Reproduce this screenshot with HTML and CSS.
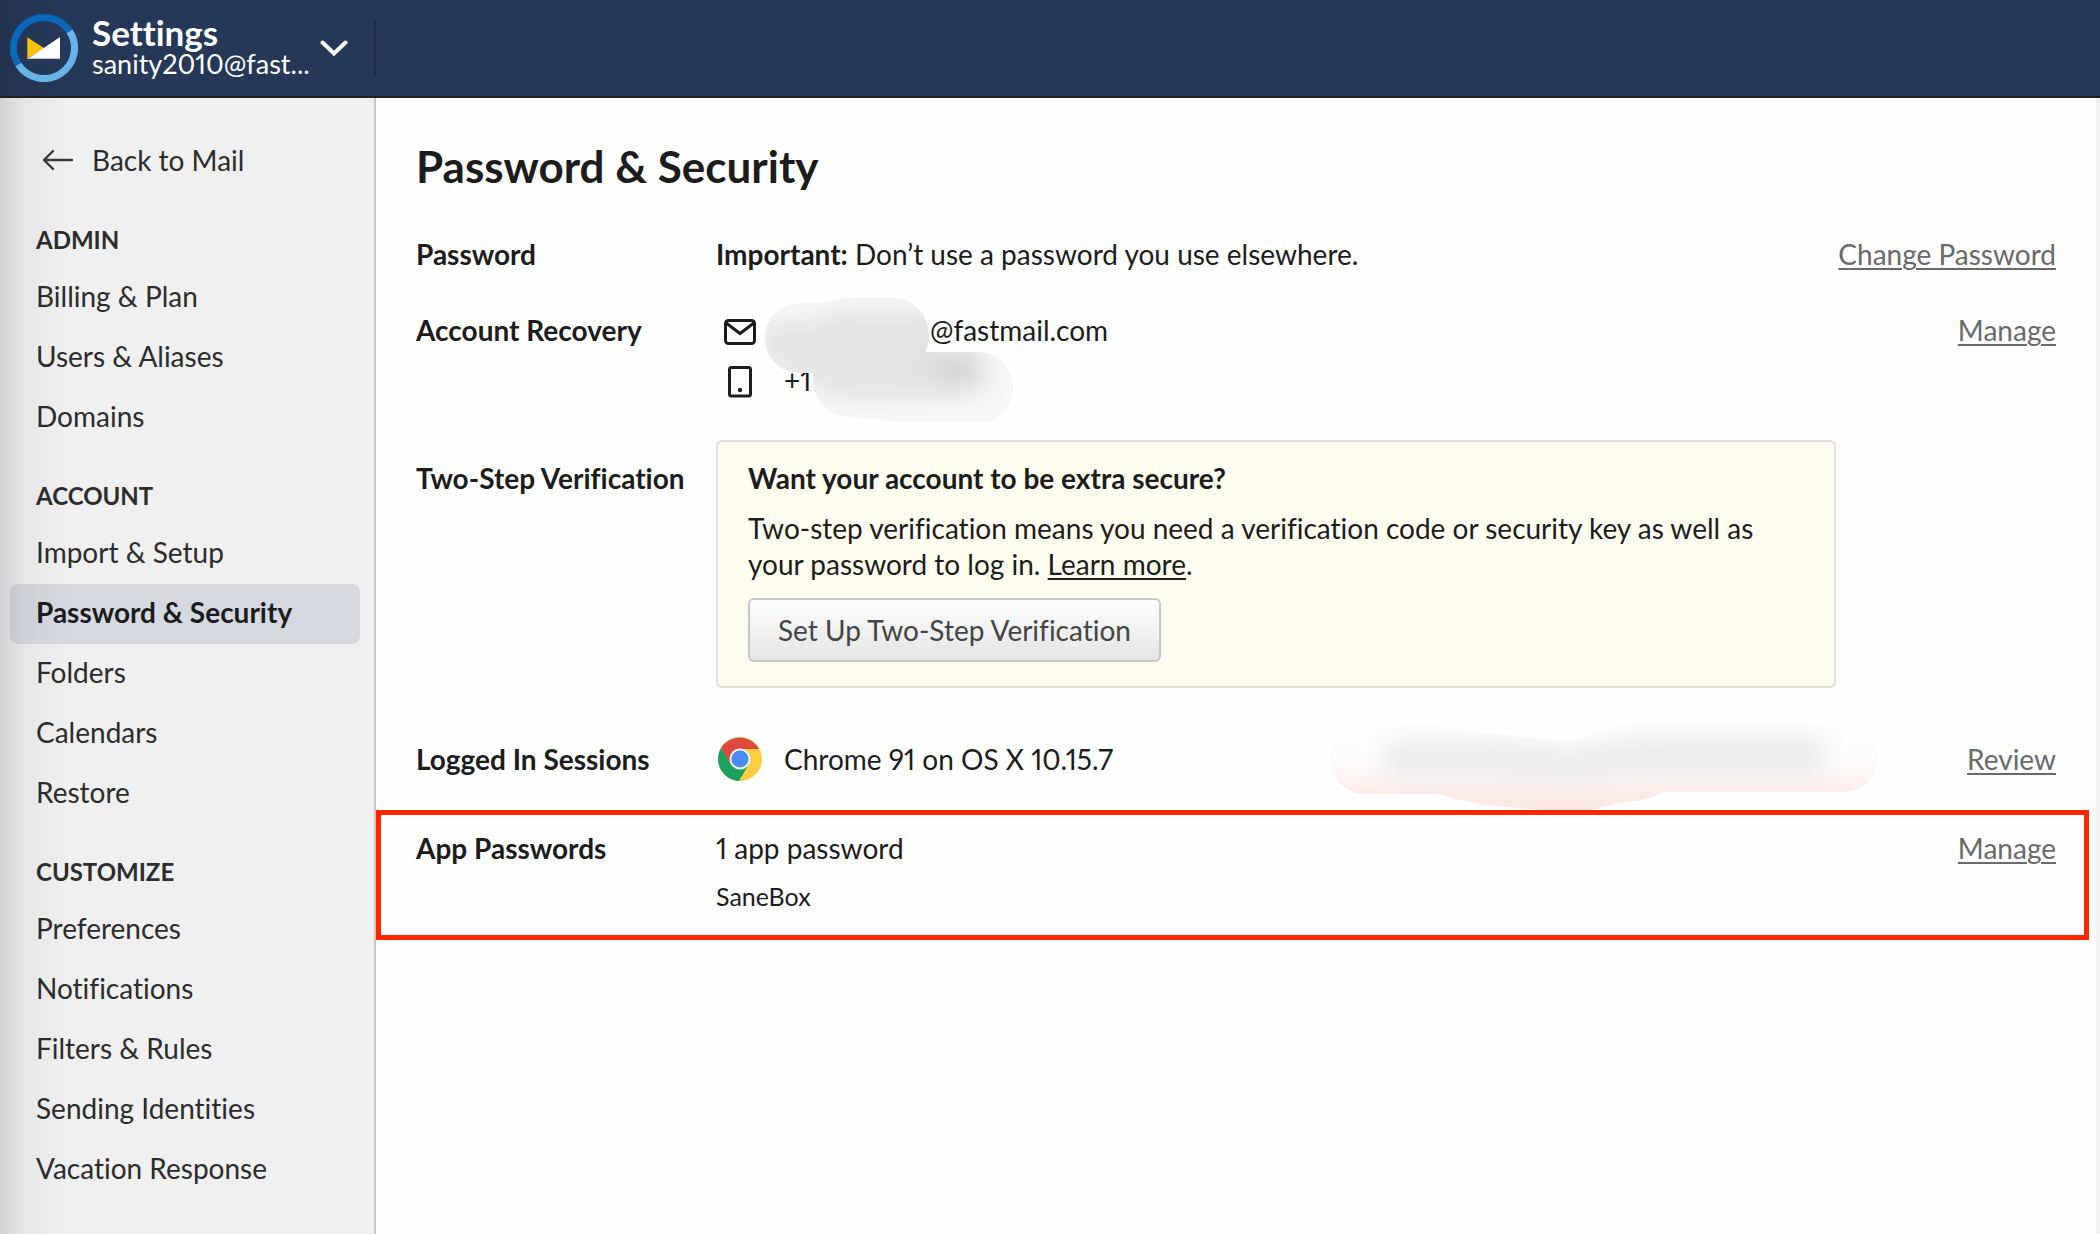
FILE: index.html
```html
<!DOCTYPE html>
<html lang="en">
<head>
<meta charset="utf-8">
<title>Password &amp; Security – Settings</title>
<link rel="stylesheet" href="styles.css">
</head>
<body>
<header class="topbar">
  <button class="account" type="button">
    <svg class="logo" viewBox="0 0 68 68" aria-hidden="true">
      <circle cx="34" cy="34" r="30.5" fill="none" stroke="#0a67b9" stroke-width="7"/>
      <path d="M59.6 17.4A30.5 30.5 0 0 1 8.4 50.6" fill="none" stroke="#69b3e7" stroke-width="7"/>
      <path d="M17.3 23.2V45L34.2 34.3Z" fill="#ffc107"/>
      <path d="M50 23V45H17.6Z" fill="#fff"/>
      <path d="M17.3 44.4H50" stroke="#b9bec6" stroke-width="1"/>
    </svg>
    <span class="account-text">
      <strong class="account-title">Settings</strong>
      <span class="account-email">sanity2010@fast...</span>
    </span>
    <svg class="chevron" viewBox="0 0 28 16" aria-hidden="true">
      <path d="M2.5 2.5 14 13.5 25.5 2.5" fill="none" stroke="#fff" stroke-width="4" stroke-linecap="round"/>
    </svg>
  </button>
</header>
<div class="layout">
  <nav class="sidebar">
    <a class="back" href="#">
      <svg class="back-icon" viewBox="0 0 32 22" aria-hidden="true">
        <path d="M30 11H2M11 2 2 11 11 20" fill="none" stroke="#3a3a3a" stroke-width="2.4" stroke-linecap="round" stroke-linejoin="round"/>
      </svg>
      Back to Mail
    </a>
    <h2 class="group">ADMIN</h2>
    <a class="item" href="#">Billing &amp; Plan</a>
    <a class="item" href="#">Users &amp; Aliases</a>
    <a class="item" href="#">Domains</a>
    <h2 class="group">ACCOUNT</h2>
    <a class="item" href="#">Import &amp; Setup</a>
    <a class="item current" href="#" aria-current="page">Password &amp; Security</a>
    <a class="item" href="#">Folders</a>
    <a class="item" href="#">Calendars</a>
    <a class="item" href="#">Restore</a>
    <h2 class="group">CUSTOMIZE</h2>
    <a class="item" href="#">Preferences</a>
    <a class="item" href="#">Notifications</a>
    <a class="item" href="#">Filters &amp; Rules</a>
    <a class="item" href="#">Sending Identities</a>
    <a class="item" href="#">Vacation Response</a>
  </nav>
  <main class="content">
    <h1 class="title">Password &amp; Security</h1>

    <section class="row">
      <h2 class="label">Password</h2>
      <p class="text"><strong>Important:</strong> Don’t use a password you use elsewhere.</p>
      <a class="action" href="#">Change Password</a>
    </section>

    <section class="row row-recovery">
      <h2 class="label">Account Recovery</h2>
      <ul class="contacts">
        <li class="contact">
          <svg class="contact-icon" viewBox="0 0 48 36" aria-hidden="true">
            <rect x="9.500" y="8.500" width="29" height="23" rx="3" fill="none" stroke="#1c1c1c" stroke-width="3"/>
            <path d="M9.500 10.500 24 21.500 38.500 10.500" fill="none" stroke="#1c1c1c" stroke-width="3"/>
          </svg>
          <span class="hidden-name"></span>@fastmail.com
        </li>
        <li class="contact">
          <svg class="contact-icon" viewBox="0 0 48 36" aria-hidden="true">
            <rect x="13.500" y="5.500" width="21" height="28.500" rx="2" fill="none" stroke="#1c1c1c" stroke-width="3"/>
            <circle cx="24" cy="28" r="2.200" fill="#1c1c1c"/>
          </svg>
          <span class="phone">+1</span>
        </li>
        <li class="smudge smudge-contact" aria-hidden="true">
          <svg viewBox="0 0 250 128">
            <defs>
              <clipPath id="contactShape">
                <path d="M36 5H58C68 2 74 0 84 0H128C149 0 164 18 164 37C164 44 162 49 160 54H212C233 54 248 70 248 90C248 110 233 125 214 125L204 124H130C120 123 118 121 112 121L84 119C62 119 48 100 48 84V75H36C15 75 0 60 0 40C0 20 16 5 36 5Z"/>
              </clipPath>
              <filter id="soft" x="-50%" y="-80%" width="200%" height="260%"><feGaussianBlur stdDeviation="13"/></filter>
            </defs>
            <g clip-path="url(#contactShape)">
              <rect width="250" height="128" fill="#f7f7f6"/>
              <g filter="url(#soft)">
                <path d="M-10 24H60V12H180V50H222V92L150 100H60L50 80H10Z" fill="#e3e3e3"/>
                <ellipse cx="190" cy="72" rx="24" ry="16" fill="#d2d2d2"/>
              </g>
            </g>
          </svg>
        </li>
      </ul>
      <a class="action" href="#">Manage</a>
    </section>

    <section class="row row-verify">
      <h2 class="label label-verify">Two-Step Verification</h2>
      <div class="notice">
        <h3 class="notice-title">Want your account to be extra secure?</h3>
        <p class="text">Two-step verification means you need a verification code or security key as well as your password to log in. <a class="inline-link" href="#">Learn more</a>.</p>
        <button class="setup" type="button">Set Up Two-Step Verification</button>
      </div>
    </section>

    <section class="row row-sessions">
      <h2 class="label">Logged In Sessions</h2>
      <div class="session">
        <svg class="chrome" viewBox="0 0 46 46" aria-hidden="true">
          <circle cx="24" cy="23" r="22" fill="#ffcd40"/>
          <path d="M24 23 33 28 23 45A22 22 0 0 1 5 12L15 28Z" fill="#1aa260"/>
          <path d="M5 12A22 22 0 0 1 43 13H24L14.500 28Z" fill="#dc4a3d"/>
          <circle cx="24" cy="23" r="10.500" fill="#f1f1f1"/>
          <circle cx="24" cy="23" r="8.500" fill="#4b8bf5"/>
        </svg>
        <span>Chrome 91 on OS X 10.15.7</span>
      </div>
      <a class="action" href="#">Review</a>
      <div class="smudge smudge-session" aria-hidden="true">
        <svg viewBox="0 0 548 88">
          <defs>
            <clipPath id="sessionShape">
              <path d="M36 2H104C122 2 140 11 160 12C180 14 198 14 212 17C224 19 240 18 248 17C262 14 270 9 278 8C286 2 292 0 304 0H512C534 0 548 16 548 35C548 54 534 70 512 70H332C322 76 314 78 304 79C286 80 272 87 256 88H212C200 86 190 86 180 85C160 84 148 82 138 79C124 78 116 72 104 72H36C14 72 0 54 0 36C0 16 14 2 36 2Z"/>
            </clipPath>
            <linearGradient id="sessionFill" x2="0" y2="1">
              <stop offset="0" stop-color="#fefefe"/>
              <stop offset=".45" stop-color="#fdfcfc"/>
              <stop offset=".8" stop-color="#fdebe8"/>
              <stop offset="1" stop-color="#fce8e5"/>
            </linearGradient>
          </defs>
          <g clip-path="url(#sessionShape)">
            <rect width="548" height="88" fill="url(#sessionFill)"/>
            <path d="M54 20H180L240 28L300 16H494V52H300L240 58L180 54H54Z" fill="#e9e9e9" filter="url(#soft)"/>
          </g>
        </svg>
      </div>
    </section>

    <section class="row row-marked">
      <h2 class="label">App Passwords</h2>
      <div>
        <p class="text">1 app password</p>
        <p class="app-name">SaneBox</p>
      </div>
      <a class="action" href="#">Manage</a>
    </section>
  </main>
</div>
</body>
</html>
```
FILE: styles.css
```css
* {
  box-sizing: border-box;
}

body {
  margin: 0;
  min-height: 100vh;
  display: flex;
  flex-direction: column;
  font-family: Lato, "Liberation Sans", sans-serif;
  font-size: 28px;
  font-variant-ligatures: none;
  font-variant-numeric: proportional-nums;
  line-height: 36px;
  color: #1c1c1c;
  background: #fefefe;
}

h1, h2, h3, p, ul {
  margin: 0;
  padding: 0;
  font-size: inherit;
  list-style: none;
}

button {
  font: inherit;
  font-variant-ligatures: none;
  font-variant-numeric: proportional-nums;
}

.topbar {
  display: flex;
  align-items: center;
  height: 98px;
  background: linear-gradient(to right, #22344f, #253858 60px);
  border-bottom: 2px solid #1f1f21;
}

.account {
  display: flex;
  align-items: center;
  width: 376px;
  height: 56px;
  padding: 0 26px 0 10px;
  color: #fff;
  text-align: left;
  background: none;
  border: 0;
  border-right: 2px solid #1d2c49;
}

.logo {
  width: 68px;
  height: 68px;
  flex: none;
  margin-right: 14px;
}

.account-text {
  display: flex;
  flex-direction: column;
  flex: 1;
}

.account-title {
  font-size: 35px;
  line-height: 32px;
}

.account-email {
  font-size: 27px;
  line-height: 32px;
}

.chevron {
  width: 28px;
  height: 16px;
  flex: none;
}

.layout {
  display: flex;
  flex: 1;
}

.sidebar {
  position: relative;
  flex: none;
  width: 376px;
  padding: 34px 14px 32px 10px;
  background: #f0f0f0;
  border-right: 2px solid #c9c9c9;
}

.sidebar::before {
  content: "";
  position: absolute;
  inset: 0 auto 0 0;
  width: 70px;
  pointer-events: none;
  background: linear-gradient(to right, rgba(0, 0, 0, .12), rgba(0, 0, 0, .04) 24px, transparent);
}

.back,
.item {
  display: flex;
  align-items: center;
  height: 60px;
  padding: 0 0 4px 26px;
  color: #2c2c2c;
  text-decoration: none;
  border-radius: 8px;
}

.back {
  padding-left: 32px;
  gap: 18px;
}

.back-icon {
  width: 32px;
  height: 22px;
}

.group {
  height: 76px;
  padding: 30px 0 0 26px;
  font-size: 24px;
  color: #2c2c2c;
}

.current {
  font-weight: 700;
  color: #1c1c1c;
  background: #d6d9df;
}

.content {
  flex: 1;
  min-width: 0;
  padding: 42px 40px;
  border-right: 4px solid #f1f1f1;
}

.title {
  margin-bottom: 44px;
  font-size: 44px;
  line-height: 52px;
}

.row {
  position: relative;
  display: grid;
  grid-template-columns: 300px 1fr 220px;
  margin-bottom: 40px;
}

.row-recovery {
  margin-bottom: 42px;
}

.action {
  justify-self: end;
  align-self: start;
  color: #696969;
  text-underline-offset: 3px;
  text-decoration-thickness: 2px;
}

.contacts {
  position: relative;
  display: flex;
  flex-direction: column;
  gap: 14px;
}

.contact {
  display: flex;
}

.contact-icon {
  width: 48px;
  height: 36px;
}

.hidden-name {
  width: 166px;
}

.phone {
  padding-left: 20px;
}

.smudge {
  position: absolute;
}

.smudge svg {
  display: block;
  width: 100%;
}

.smudge-contact {
  left: 49px;
  top: -14px;
  width: 250px;
}

.smudge-session {
  right: 178px;
  top: -14px;
  width: 548px;
  z-index: 1;
}

.row-verify {
  margin-bottom: 48px;
}

.label-verify {
  padding-top: 20px;
}

.notice {
  padding: 18px 30px 24px;
  background: #fffdf0;
  border: 2px solid #e2e0d2;
  border-radius: 6px;
}

.notice-title {
  margin-bottom: 14px;
}

.inline-link {
  color: inherit;
  text-underline-offset: 3px;
  text-decoration-thickness: 2px;
}

.setup {
  height: 64px;
  margin-top: 16px;
  padding: 0 28px;
  color: #444;
  background: linear-gradient(#fdfdfd, #e5e5e5);
  border: 2px solid #c6c6c8;
  border-radius: 6px;
}

.row-sessions {
  align-items: center;
  margin-bottom: 28px;
}

.session {
  display: flex;
  align-items: center;
  gap: 22px;
}

.chrome {
  width: 46px;
  height: 46px;
}

.row-sessions .action {
  align-self: center;
}

.row-marked {
  margin: 0 -33px 0 -40px;
  padding: 15px 28px 21px 35px;
  border: 5px solid #ff2600;
}

.app-name {
  margin-top: 12px;
  font-size: 25px;
}
```
